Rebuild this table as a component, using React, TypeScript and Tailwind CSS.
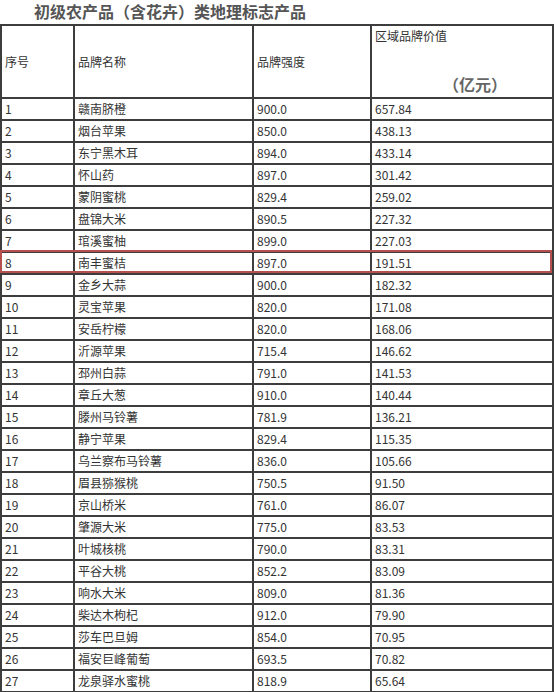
import React from 'react';

type Row = [string, string, string];

const rows: Row[] = [
  ['赣南脐橙', '900.0', '657.84'],
  ['烟台苹果', '850.0', '438.13'],
  ['东宁黑木耳', '894.0', '433.14'],
  ['怀山药', '897.0', '301.42'],
  ['蒙阴蜜桃', '829.4', '259.02'],
  ['盘锦大米', '890.5', '227.32'],
  ['琯溪蜜柚', '899.0', '227.03'],
  ['南丰蜜桔', '897.0', '191.51'],
  ['金乡大蒜', '900.0', '182.32'],
  ['灵宝苹果', '820.0', '171.08'],
  ['安岳柠檬', '820.0', '168.06'],
  ['沂源苹果', '715.4', '146.62'],
  ['邳州白蒜', '791.0', '141.53'],
  ['章丘大葱', '910.0', '140.44'],
  ['滕州马铃薯', '781.9', '136.21'],
  ['静宁苹果', '829.4', '115.35'],
  ['乌兰察布马铃薯', '836.0', '105.66'],
  ['眉县猕猴桃', '750.5', '91.50'],
  ['京山桥米', '761.0', '86.07'],
  ['肇源大米', '775.0', '83.53'],
  ['叶城核桃', '790.0', '83.31'],
  ['平谷大桃', '852.2', '83.09'],
  ['响水大米', '809.0', '81.36'],
  ['柴达木枸杞', '912.0', '79.90'],
  ['莎车巴旦姆', '854.0', '70.95'],
  ['福安巨峰葡萄', '693.5', '70.82'],
  ['龙泉驿水蜜桃', '818.9', '65.64'],
];

const cell = 'border-2 border-[#3d3d3d] px-[3px] py-0 align-middle text-left';

export default function App() {
  return (
    <div className="w-[554px] h-[692px] overflow-hidden bg-white text-[#333] font-['Noto_Sans_CJK_SC','Noto_Sans',sans-serif]">
      {/* 标题 */}
      <div className="h-[24px] pl-[34px] text-[16px] leading-[22px] font-bold text-[#555]">
        初级农产品（含花卉）类地理标志产品
      </div>

      <div className="relative">
        <table className="w-[552px] table-fixed border-collapse text-[12px] leading-[16px]">
          <colgroup>
            <col className="w-[73px]" />
            <col className="w-[179px]" />
            <col className="w-[118px]" />
            <col className="w-[182px]" />
          </colgroup>
          <thead>
            <tr className="h-[72px]">
              <td className={cell}>序号</td>
              <td className={cell}>品牌名称</td>
              <td className={cell}>品牌强度</td>
              <td className="border-2 border-[#3d3d3d] px-[3px] pt-[2px] pb-[4px] align-top text-left">
                <div>区域品牌价值</div>
                <div className="mt-[31px] pl-[68px] text-[16px] leading-[18px] font-bold text-[#666]">（亿元）</div>
              </td>
            </tr>
          </thead>
          <tbody>
            {rows.map((r, i) => (
              <tr key={i} className="h-[22px]">
                <td className={cell}>{i + 1}</td>
                <td className={cell}>{r[0]}</td>
                <td className={cell}>{r[1]}</td>
                <td className={cell}>{r[2]}</td>
              </tr>
            ))}
          </tbody>
        </table>
        {/* 第 8 行高亮框 */}
        <div className="pointer-events-none absolute left-0 top-[226px] h-[23px] w-[552px] border-2 border-[#b5504e]" />
      </div>
    </div>
  );
}
